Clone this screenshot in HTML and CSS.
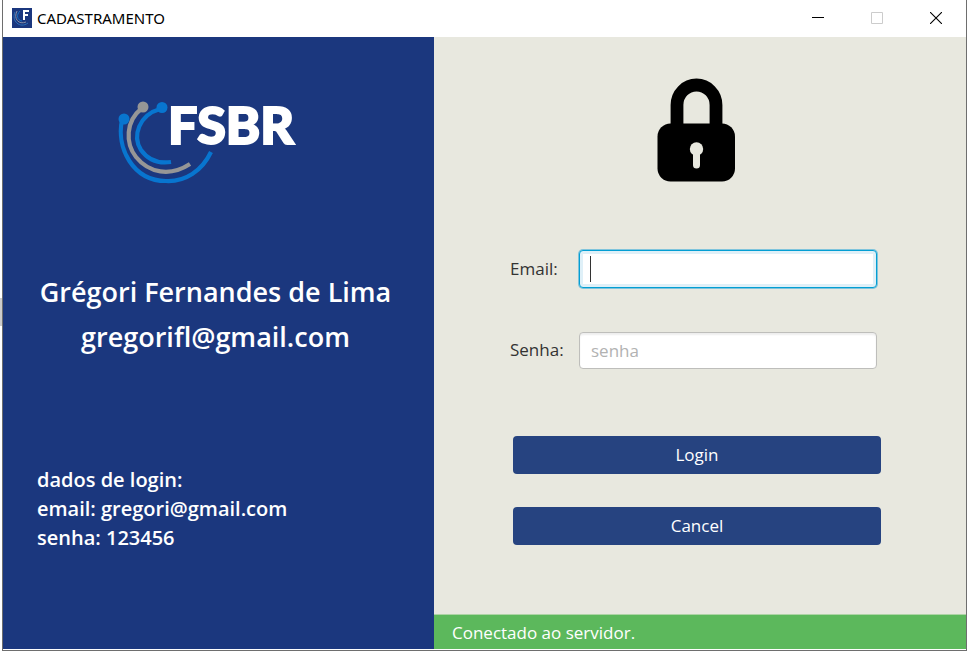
FILE: index.html
```html
<!DOCTYPE html>
<html lang="pt-BR">
<head>
<meta charset="utf-8">
<title>CADASTRAMENTO</title>
<link rel="stylesheet" href="styles.css">
</head>
<body>
<div class="window">
  <header class="titlebar">
    <svg class="app-icon" viewBox="0 0 20 20" aria-hidden="true">
      <rect width="20" height="20" fill="#1b377e"/>
      <path d="M3 4C-1 13 8 21 16 15" fill="none" stroke="#2c70b8" stroke-width="1"/>
      <path d="M5 3C1 11 7 17 14 14" fill="none" stroke="#8790a8" stroke-width="1"/>
      <path d="M8 3C4 7 5 12 10 13" fill="none" stroke="#1673c4" stroke-width="1"/>
      <path d="M12 12V3H17M12 7H16" fill="none" stroke="#fff" stroke-width="2"/>
    </svg>
    <h1 class="title">CADASTRAMENTO</h1>
    <div class="controls">
      <button class="control" type="button" aria-label="Minimizar"><svg viewBox="0 0 12 12"><path d="M0 5.5H12" stroke="#000"/></svg></button>
      <button class="control" type="button" aria-label="Maximizar" disabled><svg viewBox="0 0 12 12"><path d="M.5.5H11.500V11.500H.5Z" fill="none" stroke="#ccc"/></svg></button>
      <button class="control" type="button" aria-label="Fechar"><svg viewBox="0 0 12 12"><path d="M0 0L12 12M12 0L0 12" stroke="#000" stroke-width="1.100"/></svg></button>
    </div>
  </header>
  <main class="content">
    <section class="brand">
      <svg class="logo" viewBox="0 -20 200 110" role="img" aria-label="FSBR">
        <g fill="none" stroke-width="4.200">
          <path d="M4 23C-2 51 15 84 48 84C67 85 84 74 93 55" stroke="#0875cf"/>
          <path d="M23 12C8 24 7 46 18 60C31 76 52 80 72 67" stroke="#969696"/>
          <path d="M42 12C21 18 14 39 23 53C30 63 39 67 53 65" stroke="#0875cf"/>
        </g>
        <circle cx="6" cy="22" r="5.500" fill="#0875cf"/>
        <circle cx="25" cy="10" r="5.500" fill="#969696"/>
        <circle cx="44" cy="10.500" r="5.500" fill="#0875cf"/>
        <text class="logo-text" x="50" y="47">FSBR</text>
      </svg>
      <div class="author">
        <p>Grégori Fernandes de Lima</p>
        <p>gregorifl@gmail.com</p>
      </div>
      <div class="credentials">
        <p>dados de login:</p>
        <p>email: gregori@gmail.com</p>
        <p>senha: 123456</p>
      </div>
    </section>
    <section class="access">
      <form class="form">
        <svg class="lock" viewBox="0 0 78 104" aria-hidden="true">
          <path d="M20 50V27A19.500 20 0 0 1 59 27V50" fill="none" stroke="#000" stroke-width="12.800"/>
          <rect x=".5" y="45.500" width="77.500" height="58" rx="13"/>
          <circle cx="39.500" cy="71" r="6.700" fill="#e8e8df"/>
          <path d="M39.500 72V87" stroke="#e8e8df" stroke-width="7" stroke-linecap="round"/>
        </svg>
        <div class="fields">
          <label for="email">Email:</label>
          <div class="field"><input class="input active" id="email" type="email"><span class="caret"></span></div>
          <label for="senha">Senha:</label>
          <div class="field"><input class="input" id="senha" type="password" placeholder="senha"></div>
        </div>
        <div class="actions">
          <button class="action" type="submit">Login</button>
          <button class="action" type="button">Cancel</button>
        </div>
      </form>
      <footer class="status">Conectado ao servidor.</footer>
    </section>
  </main>
</div>
</body>
</html>
```
FILE: styles.css
```css
* { box-sizing: border-box; }

body {
  margin: 0;
  background: linear-gradient(#ccc, #ccc) 0 298px / 2px 28px no-repeat #fff;
  font-family: "Open Sans", "Noto Sans", sans-serif;
}

p, h1 { margin: 0; }

.window {
  display: flex;
  flex-direction: column;
  min-height: 100vh;
  margin-left: 2px;
  border: 1px solid #6e6e6e;
  border-top: 0;
  padding-bottom: 1px;
  background: #fff;
}

.titlebar {
  display: flex;
  align-items: center;
  height: 37px;
  padding: 0 1px 2px 9px;
}

.app-icon { width: 20px; height: 20px; }

.title {
  margin-left: 5px;
  font: 400 15px/20px "Noto Sans", sans-serif;
  color: #000;
}

.controls { display: flex; margin-left: auto; }

.control {
  display: grid;
  place-items: center;
  width: 59px;
  height: 36px;
  padding: 0;
  border: 0;
  background: none;
}

.control svg { width: 12px; height: 12px; }

.content {
  flex: 1;
  display: grid;
  grid-template-columns: 431fr 532fr;
}

.brand {
  padding: 40px 40px 60px 34px;
  background: #1b377e;
  color: #fff;
}

.logo {
  display: block;
  width: 200px;
  height: 110px;
  margin-left: 81px;
}

.logo-text {
  fill: #fff;
  stroke: #fff;
  stroke-width: 2px;
  font: 900 52px "Open Sans SemiCondensed", "Noto Sans SemiCondensed", "Lato", sans-serif;
}

.author {
  display: grid;
  justify-content: center;
  margin-top: 82px;
  font-size: 27px;
  font-weight: 600;
  line-height: 45px;
  text-align: center;
  white-space: nowrap;
}

.credentials {
  margin-top: 106px;
  font-size: 20px;
  font-weight: 600;
  line-height: 29px;
}

.access {
  display: flex;
  flex-direction: column;
  background: #e8e8df;
}

.form {
  flex: 1;
  padding: 41px 85px 0 76px;
}

.lock {
  display: block;
  width: 78px;
  height: 104px;
  margin: 0 auto;
}

.fields {
  display: grid;
  grid-template-columns: 69px 1fr;
  row-gap: 44px;
  align-items: center;
  margin-top: 68px;
  padding-right: 4px;
  font-size: 17px;
  color: #333;
}

.fields label { padding-bottom: 2px; }

.field { position: relative; }

.input {
  display: block;
  width: 100%;
  height: 37px;
  padding: 0 11px 1px;
  border: 1px solid #bebebb;
  border-radius: 4px;
  background: #fff;
  box-shadow: inset 0 2px 2px #eee;
  font: inherit;
  color: #333;
  outline: 0;
}

.input.active {
  height: 38px;
  border: 1px solid #039ed3;
  box-shadow: 0 0 0 1px #7fc4dc, inset 0 0 0 3px #dff0f8;
}

.input::placeholder { color: #b2b2b2; }

.caret {
  position: absolute;
  top: 6px;
  left: 11px;
  width: 1px;
  height: 26px;
  background: #333;
}

.actions {
  display: grid;
  gap: 33px;
  margin-top: 67px;
  padding-left: 3px;
}

.action {
  height: 38px;
  padding: 0 0 2px;
  border: 0;
  border-radius: 4px;
  background: #264380;
  color: #fff;
  font: 400 17px "Open Sans", sans-serif;
}

.status {
  height: 35px;
  padding-left: 18px;
  border-top: 1px solid #add4a5;
  background: #5cb85c;
  color: #fff;
  font-size: 17px;
  line-height: 35px;
}
```
